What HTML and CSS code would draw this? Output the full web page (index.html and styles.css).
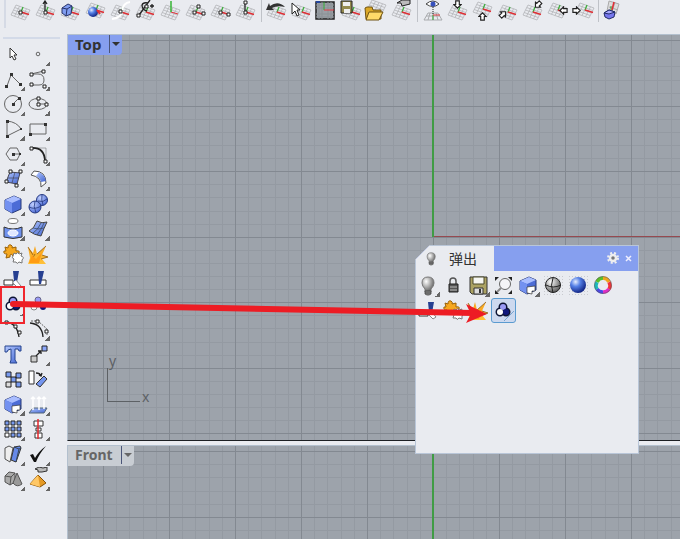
FILE: index.html
```
<!DOCTYPE html>
<html lang="zh">
    <head>
        <meta charset="UTF-8">
        <title>Top / Front</title>
        <link rel="stylesheet" href="styles.css">
    </head>
    <body>
        <!-- shared icons -->
        <svg class="defs" aria-hidden="true">
            <defs>
                <linearGradient id="gBlue" x1="0" y1="0" x2="1" y2="1"><stop offset="0" stop-color="#b3c8ff"/><stop offset="1" stop-color="#3f62cf"/></linearGradient>
                <radialGradient id="gBall" cx=".35" cy=".3" r=".75"><stop offset="0" stop-color="#e6eeff"/><stop offset=".4" stop-color="#5580e6"/><stop offset="1" stop-color="#0b1c7c"/></radialGradient>
                <radialGradient id="gSoft" cx=".35" cy=".3" r=".8"><stop offset="0" stop-color="#c3d2ff"/><stop offset="1" stop-color="#3f5fd0"/></radialGradient>
                <radialGradient id="gGrey" cx=".35" cy=".3" r=".75"><stop offset="0" stop-color="#fff"/><stop offset=".5" stop-color="#aaa"/><stop offset="1" stop-color="#555"/></radialGradient>
                <linearGradient id="gGold" x1="0" y1="0" x2="0" y2="1"><stop offset="0" stop-color="#f7a21a"/><stop offset="1" stop-color="#ffc23c"/></linearGradient>
            </defs>
            <symbol id="mesh" viewBox="0 0 25 25">
                <path d="M8 5L22 10L17 20L3 15ZM11.500 6.300L6.500 16.300M15 7.500L10 17.500M18.500 8.800L13.500 18.800M6.700 7.500L20.700 12.500M5.500 10L19.500 15M4.200 12.500L18.200 17.500" fill="none" stroke="#b2b4b8" stroke-width=".8"/>
            </symbol>
            <symbol id="plane" viewBox="0 0 25 25">
                <use href="#mesh"/>
                <path d="M13 12L15 7" stroke="#3fae3f" stroke-width="1.300"/>
                <path d="M13 12L21 14.500" stroke="#e02f35" stroke-width="1.400"/>
            </symbol>
            <symbol id="arrow" viewBox="0 0 10 10">
                <path d="M3 1H7V5H9L5 9L1 5H3Z" fill="#fff" stroke="#222" stroke-width="1.300"/>
            </symbol>
            <symbol id="puzzle" viewBox="0 0 25 25">
                <path d="M4 5L7 6Q7 2 10 3Q12 4 11 6L15 5L15 9Q19 8 18 11L15 12L15 15L12 14Q11 11 9 13L9 15L5 16L6 12Q2 12 3 9L5 9Z" fill="#f6a81f" stroke="#9a6209"/>
                <path d="M13 11L15 12Q17 9 18 12L21 11L20 14Q24 15 21 18L21 21L18 20Q16 23 15 20L12 20L13 17Q10 16 12 14Z" fill="#fff" stroke="#777"/>
            </symbol>
            <symbol id="burst" viewBox="0 0 25 25">
                <path d="M2 5L7 11L9 4L11 12L20 4L16 13L22 15L16 17L20 22H2L4 16Z" fill="url(#gGold)"/>
                <path d="M2 5L7 13M11 12L20 4M16 13L22 15L15 17M9 12L4 21" fill="none" stroke="#8a5a14" stroke-width=".8"/>
                <path d="M3 21L6 13L10 17L16 10L13 21Z" fill="#ff9c14"/>
            </symbol>
            <symbol id="trim" viewBox="0 0 25 25">
                <path d="M3 13H12V18H3Z" fill="#fff" stroke="#333"/>
                <path d="M12 4H18L16 15L13 14Z" fill="#263f91"/>
                <path d="M15 13L20 19L17 21L12 16" fill="#fff" stroke="#888"/>
            </symbol>
            <symbol id="balls" viewBox="0 0 25 25">
                <g stroke="#0c1334" stroke-width="3"><circle cx="12" cy="9" r="3"/><circle cx="9" cy="14" r="3"/><circle cx="15" cy="14" r="3"/></g>
                <circle cx="12" cy="9" r="3" fill="#9a9af6"/><circle cx="9" cy="14" r="3" fill="#fff"/><circle cx="15" cy="14" r="3" fill="#10177b"/>
            </symbol>
            <symbol id="cube" viewBox="0 0 25 25">
                <path d="M4 8L13 4L20 7V17L11 21L4 17Z" fill="#4c6cd6" stroke="#293a78"/>
                <path d="M4 8L13 4L20 7L11 11Z" fill="#a9bdff"/><path d="M4 8L11 11V21L4 17Z" fill="#7391f0"/>
            </symbol>
            <symbol id="cubeCut" viewBox="0 0 25 25">
                <use href="#cube"/><path d="M11 14L19 13V18L16 18V21L11 20Z" fill="#fff" stroke="#333" stroke-width=".7"/>
            </symbol>
            <symbol id="disk" viewBox="0 0 25 25">
                <path d="M4 4H21V21H6L4 19Z" fill="#aba263" stroke="#333"/>
                <path d="M7 4H18V11H7Z" fill="#f5f6f2" stroke="#4d4a2a"/><path d="M8 15H17V21H8Z" fill="#ddd" stroke="#333"/><path d="M13 16H15V20H13Z" fill="#333"/>
            </symbol>
            <symbol id="bulb" viewBox="0 0 25 25">
                <path d="M12 4Q6 4 6 10Q6 13 9 16V19H15V16Q18 13 18 10Q18 4 12 4Z" fill="url(#gGrey)" stroke="#777"/>
                <path d="M9 18H15V21L13 22H11L9 21ZM9 20H15" fill="#888" stroke="#444" stroke-width=".8"/>
            </symbol>
        </svg>

        <header class="toolbar">
            <button aria-label="CPlane origin"><svg><use href="#plane"/><path class="dot" d="M11 11h3v3h-3z"/></svg></button>
            <button aria-label="CPlane elevation"><svg><use href="#plane"/><path class="ink" d="M12 11V1M10 4L12 1L14 4"/><path class="dot" d="M11 11h3v3h-3z"/></svg></button>
            <button aria-label="CPlane to object"><svg><use href="#plane"/><path d="M4 8L10 4L14 6L13 14L8 16L4 13Z" fill="#7f9cf0" stroke="#27336b"/><path d="M4 8L9 9L14 6M9 9L8 16" stroke="#27336b" fill="none"/></svg></button>
            <button aria-label="CPlane to surface"><svg><use href="#plane" y="-2"/><circle cx="10" cy="12" r="5" fill="url(#gBall)"/><path d="M14 10L17 14" stroke="#e02f35" stroke-width="2"/></svg></button>
            <button aria-label="CPlane to curve"><svg><use href="#plane"/><path d="M4 19Q13 18 14 11Q15 3 22 2" fill="none" stroke="#fff" stroke-width="2"/><path class="dot" d="M11 10h3v3h-3z"/></svg></button>
            <button aria-label="CPlane perpendicular"><svg><use href="#plane"/><path class="ink" d="M6 15L17 0M9 5Q10 2 15 3M9 5Q9 10 14 11M17 6H21M19 4V8"/><path class="dot" d="M4 14h3v3h-3zM12 5h3v3h-3z"/></svg></button>
            <button aria-label="CPlane rotate"><svg><use href="#mesh"/><path d="M13 12L20 14" stroke="#e02f35"/><path d="M13 12V1" stroke="#35b535" stroke-width="1.500"/></svg></button>
            <button aria-label="CPlane 3 points"><svg><use href="#plane"/><path class="dot" d="M10 11h3v3h-3zM14 5h3v3h-3zM19 12h3v3h-3z"/></svg></button>
            <button aria-label="CPlane X axis"><svg><use href="#plane"/><path class="dot" d="M11 11h3v3h-3zM19 13h3v3h-3z"/></svg></button>
            <button aria-label="CPlane Z axis"><svg><use href="#plane"/><path class="ink" d="M12 11V3"/><path class="dot" d="M11 11h3v3h-3zM11 1h3v3h-3z"/></svg></button>
            <i class="sep"></i>
            <button aria-label="Previous CPlane"><svg><use href="#plane"/><path d="M2 10L5 3L6 6Q14 0 21 7Q13 5 8 8L10 10Z" fill="#333"/></svg></button>
            <button aria-label="Select CPlane"><svg><use href="#plane"/><path d="M3 3V14L6 11L8 16L10 15L8 10H11Z" fill="#fff" stroke="#222"/></svg></button>
            <button aria-label="Named CPlanes"><svg><path d="M2 2H20V19H2Z" fill="#9a9fa5" stroke="#222" stroke-width="1.500"/><path d="M5 2V19M8 2V19M14 2V19M17 2V19M2 5H20M2 8H20M2 14H20M2 17H20" stroke="#8b9196"/><path d="M10 2V10" stroke="#35ac35"/><path d="M10 10H20" stroke="#e23a40"/><path d="M2 2H6" stroke="#23459c" stroke-width="2"/></svg></button>
            <button aria-label="Save CPlane"><svg><use href="#plane"/><path d="M2 1H13V13H2Z" fill="#958b4f" stroke="#222"/><path d="M4 2H11V6H4ZM5 9H11V13H5Z" fill="#eee"/></svg></button>
            <button aria-label="Open CPlane"><svg><use href="#mesh" y="-5"/><path d="M1 8L3 7H8L9 10H17V19H2Z" fill="#dba827" stroke="#6f5312"/><path d="M5 12H19L15 20H2Z" fill="#ffda69" stroke="#6f5312"/></svg></button>
            <button aria-label="Read CPlane"><svg><use href="#plane"/><path d="M8 3L13 0H21V4L17 5L13 6L12 3Z" fill="#bbb" stroke="#222"/></svg></button>
            <i class="sep"></i>
            <button aria-label="Plan view"><svg><path d="M8 13H18L22 20H4ZM10 13L8 20M13 13V20M16 13L18 20M6 16H20" fill="none" stroke="#a9abae"/><path d="M6 4Q13 -2 19 4Q13 9 6 4Z" fill="#fff" stroke="#444"/><circle cx="13" cy="4" r="2.500" fill="#3650bc"/><path d="M13 7V15" stroke="#222" stroke-dasharray="1 1"/><path d="M13 15V20" stroke="#30a030"/><path d="M13 15H20" stroke="#e23a40"/></svg></button>
            <button aria-label="World top"><svg><use href="#plane"/><use href="#arrow" x="8" y="0" width="9" height="9"/></svg></button>
            <button aria-label="World bottom"><svg><use href="#plane" y="-3"/><use href="#arrow" width="9" height="9" transform="translate(17 21) rotate(180)"/></svg></button>
            <button aria-label="World left"><svg><use href="#plane"/><use href="#arrow" width="9" height="9" transform="translate(4 11) rotate(-135 4 4)"/></svg></button>
            <button aria-label="World right"><svg><use href="#plane"/><use href="#arrow" width="9" height="9" transform="translate(14 0) rotate(45 4 4)"/></svg></button>
            <button aria-label="World front"><svg><use href="#plane" y="-2"/><use href="#arrow" width="9" height="9" transform="translate(23 6) rotate(90)"/></svg></button>
            <button aria-label="World back"><svg><use href="#plane" x="2" y="-2"/><use href="#arrow" width="9" height="9" transform="translate(2 15) rotate(-90)"/></svg></button>
            <i class="sep"></i>
            <button aria-label="Box view"><svg><path d="M8 1L18 4L15 14L6 11ZM14 2L11 12M8 7L17 10" fill="#ddd" stroke="#aaa"/><path d="M10 10V6" stroke="#289b28"/><path d="M11 10L13 2" stroke="#e02f35" stroke-width="1.500"/><path d="M3 13L8 10L14 12L13 17L8 19L4 17Z" fill="#7777ed" stroke="#222c69"/><path d="M3 13L8 14L14 12L8 10Z" fill="#a9a9ff" stroke="#222c69"/></svg></button>
        </header>

        <main class="work">
            <aside class="palette">
                <button aria-label="Select"><svg><path d="M9 6V16L11 14L13 18L15 17L13 13H16Z" fill="#fff" stroke="#333"/></svg></button>
                <button class="fly" aria-label="Point"><svg><circle class="fine" cx="12" cy="12" r="1.800"/></svg></button>
                <button class="fly" aria-label="Polyline"><svg><path class="fine" d="M6 19L10 8L19 17"/><path class="spot" d="M4 18h3v3h-3zM9 6h3v3h-3zM18 16h3v3h-3z"/></svg></button>
                <button class="fly" aria-label="Curve"><svg><path class="fine" d="M5 7H12Q18 7 18 13Q18 18 13 18H5M5 7L18 4"/><path class="dot" d="M4 6h3v3h-3zM16 3h3v3h-3zM4 16h3v3h-3zM17 18h3v3h-3z"/></svg></button>
                <button class="fly" aria-label="Circle"><svg><circle class="fine" cx="12" cy="12" r="8.500"/><path class="fine" d="M12 12L18 6"/><path class="spot" d="M11 11h3v3h-3zM17 5h3v3h-3z"/></svg></button>
                <button class="fly" aria-label="Ellipse"><svg><ellipse class="fine" cx="12" cy="12" rx="9" ry="5.500"/><path class="fine" d="M12 6V12H20"/><path class="dot" d="M11 5h3v3h-3zM11 11h3v3h-3zM19 11h3v3h-3z"/></svg></button>
                <button class="fly" aria-label="Arc"><svg><path class="fine" d="M6 4Q16 5 20 12L6 19Z"/><path class="spot" d="M5 3h3v3h-3zM19 11h2v2h-2zM5 18h3v3h-3z"/></svg></button>
                <button class="fly" aria-label="Rectangle"><svg><path class="fine" d="M4 7H20V17H4Z"/><path class="spot" d="M3 16h3v3h-3zM18 6h3v3h-3z"/></svg></button>
                <button class="fly" aria-label="Polygon"><svg><path class="fine" d="M5 12L9 6H16L19 12L16 18H9ZM12 12H19"/><path class="spot" d="M11 11h3v3h-3zM18 11h2v2h-2z"/></svg></button>
                <button class="fly" aria-label="Fillet curves"><svg><path class="fine" d="M5 6H20V20" opacity=".5"/><path d="M5 6Q19 5 19 20" fill="none" stroke="#222" stroke-width="1.800"/><path class="dot" d="M4 5h3v3h-3zM18 18h3v3h-3z"/></svg></button>
                <button class="fly" aria-label="Surface from points"><svg><path d="M9 5L19 6L16 17L5 15Z" fill="url(#gBlue)" stroke="#445"/><path d="M14 5L11 16M7 11L18 11" stroke="#445" stroke-width=".7"/><path class="dot" d="M8 3h3v3h-3zM18 3h3v3h-3zM14 17h3v3h-3zM4 13h3v3h-3z"/></svg></button>
                <button class="fly" aria-label="Loft"><svg><path d="M5 8L8 4Q20 4 20 16L15 20Q16 10 5 8Z" fill="#fff" stroke="#555"/><path d="M10 9L13 5Q19 8 20 14L15 15Q14 11 10 9Z" fill="url(#gBlue)"/></svg></button>
                <button class="fly" aria-label="Box"><svg><use href="#cube"/></svg></button>
                <button class="fly" aria-label="Boolean union"><svg><circle cx="16" cy="8" r="5.500" fill="url(#gSoft)" stroke="#263a82"/><circle cx="9" cy="15" r="6" fill="url(#gSoft)" stroke="#263a82"/><path d="M3 15Q9 18 15 14M9 9Q7 14 10 21M12 9Q17 11 21 7M16 3Q15 7 17 13" fill="none" stroke="#24397f" stroke-width=".8"/></svg></button>
                <button class="fly" aria-label="Project"><svg><ellipse cx="12" cy="4" rx="5" ry="2.500" fill="#fff" stroke="#777"/><path d="M3 10Q12 14 21 10V20Q12 23 3 20Z" fill="#6f91ed" stroke="#333"/><ellipse cx="12" cy="16" rx="5" ry="3" fill="#dfe7ff" stroke="#fff"/></svg></button>
                <button class="fly" aria-label="Surface tools"><svg><path d="M3 14Q8 12 11 4Q16 7 21 5Q18 11 15 19Q8 18 3 14Z" fill="url(#gBlue)" stroke="#444"/><path d="M7 16Q12 13 15 6M11 18Q15 13 18 6M7 11Q12 13 18 11" fill="none" stroke="#345" stroke-width=".7"/></svg></button>
                <button aria-label="Join"><svg><use href="#puzzle"/></svg></button>
                <button aria-label="Explode"><svg><use href="#burst"/></svg></button>
                <button aria-label="Trim"><svg><use href="#trim"/></svg></button>
                <button aria-label="Split"><svg><path d="M4 13H20V18H4Z" fill="#fff" stroke="#333"/><path d="M12 4H18L15 17H13Z" fill="#263f91"/></svg></button>
                <button class="fly marked" aria-label="Group"><svg><use href="#balls"/></svg></button>
                <button aria-label="Ungroup"><svg><circle cx="12" cy="8" r="3" fill="#9a9af6" stroke="#668"/><circle cx="8" cy="15" r="3" fill="#fff" stroke="#888"/><circle cx="17" cy="15" r="3" fill="#10177b"/></svg></button>
                <button aria-label="Edit points"><svg><path class="ink" d="M5 5Q16 6 18 20"/><path class="dot" d="M4 4h3v3h-3zM13 8h3v3h-3zM17 14h3v3h-3z"/></svg></button>
                <button class="fly" aria-label="Control points"><svg><path class="ink" d="M4 6Q16 7 17 20"/><path class="fine" d="M5 4H12L21 12V18" stroke-dasharray="2 1"/><path class="dot" d="M10 3h3v3h-3zM19 13h3v3h-3z"/></svg></button>
                <button aria-label="Text"><svg><path d="M4 4H20V9H18L17 7L14 7V18L16 21H9L10 18V7L7 8L6 10H4Z" fill="url(#gBlue)" stroke="#27458e"/></svg></button>
                <button class="fly" aria-label="Move"><svg><path d="M16 4H21V9H16Z" fill="#8ba6fa" stroke="#222"/><path d="M5 14H11V20H5Z" fill="#ccc" stroke="#333"/><path class="ink" d="M10 14L15 9M12 9H15V12"/></svg></button>
                <button aria-label="Copy"><svg class="boxes"><path d="M5 5h5v5h-5zM15 6h5v5h-5zM10 10h5v5h-5zM15 15h5v5h-5z"/><path fill="#ddd" d="M5 15h5v5h-5z"/></svg></button>
                <button aria-label="Rotate"><svg><path d="M3 4H8V17H3Z" fill="#fff" stroke="#333"/><path d="M18 9L21 12L14 20L10 17Z" fill="#7495ef" stroke="#333"/><path class="ink" d="M10 6Q14 6 15 9M13 8L15 9L16 6"/></svg></button>
                <button class="fly" aria-label="Solid edit"><svg><use href="#cubeCut"/></svg></button>
                <button class="fly" aria-label="Extrude"><svg><path d="M7 16H21L18 21H3Z" fill="url(#gBlue)" stroke="#567"/><path d="M7 18V5M13 18V5M18 17V5M5 7L7 5L9 7M11 7L13 5L15 7M16 7L18 5L20 7" fill="none" stroke="#fff" stroke-width="1.500"/></svg></button>
                <button class="fly" aria-label="Array"><svg class="boxes"><path d="M4 4h4v4h-4zM10 4h4v4h-4zM16 4h4v4h-4zM4 10h4v4h-4zM10 10h4v4h-4zM16 10h4v4h-4zM10 16h4v4h-4zM16 16h4v4h-4z"/><path fill="#fff" d="M4 16h4v4h-4z"/></svg></button>
                <button class="fly" aria-label="Align"><svg><path d="M8 4H17V9H8ZM10 11H15V14H10ZM9 16H16V21H9Z" fill="#fff" stroke="#333"/><path d="M12 2V22" stroke="#e52a2f" stroke-width="1.500"/></svg></button>
                <button class="fly" aria-label="Mirror"><svg><path d="M4 6L8 4L12 6L9 20L4 17Z" fill="#eee" stroke="#555"/><path d="M13 5L19 4L20 6L15 20L10 18Z" fill="#6689e8" stroke="#333"/><path d="M13 5L18 7L20 6M18 7L15 20" fill="none" stroke="#345"/></svg></button>
                <button class="fly" aria-label="Check"><svg><path d="M4 13L7 12L9 16Q13 9 20 4Q13 12 10 20H8Z" fill="#111"/></svg></button>
                <button class="fly" aria-label="Primitives"><svg><path d="M4 9L8 5L14 6V15L9 18L4 15Z" fill="#aaa" stroke="#555"/><path d="M4 9L10 10L14 6M10 10L9 18" fill="none" stroke="#555"/><path d="M16 6L21 17Q16 21 12 16Z" fill="#999" stroke="#555"/></svg></button>
                <button class="fly" aria-label="Edit solid"><svg><path d="M12 8L20 16L14 20L4 17Z" fill="#e59a25" stroke="#875209"/><path d="M12 8L14 20L4 17Z" fill="#ffc765"/><path d="M9 2L13 0L17 1L21 0V4L16 5L12 5V3Z" fill="#bbb" stroke="#333"/></svg></button>
            </aside>

            <div class="views">
                <section class="view">
                    <button class="name">Top<i></i></button>
                    <div class="axis-y"></div>
                    <div class="axis-x"></div>
                    <div class="ucs"><span class="y">y</span><span class="corner"></span><span class="x">x</span></div>
                </section>
                <section class="view view2">
                    <button class="name">Front<i></i></button>
                    <div class="axis-y"></div>
                </section>
            </div>
        </main>

        <!-- floating panel -->
        <section class="popup">
            <div class="title">
                <h2><svg><use href="#bulb" width="17" height="17" x="5" y="4"/></svg>弹出</h2>
                <button aria-label="Options"><svg viewBox="0 0 25 25"><circle cx="15" cy="12" r="5" fill="none" stroke="#eee" stroke-width="2" stroke-dasharray="2 2"/><circle cx="15" cy="12" r="3" fill="#777" stroke="#eee" stroke-width="2.500"/></svg></button>
                <button class="close" aria-label="Close"><svg viewBox="0 0 12 25"><path d="M3 10L8 15M8 10L3 15" stroke="#eef" stroke-width="1.500"/></svg></button>
            </div>
            <div class="tools">
                <button class="fly" aria-label="Hide"><svg><use href="#bulb"/></svg></button>
                <button aria-label="Lock"><svg><path d="M9 12V8Q9 5 12 5Q15 5 15 8V12" fill="none" stroke="#555" stroke-width="1.500"/><path d="M8 11H17V19H8Z" fill="#555" stroke="#222"/><path d="M9 14H16M9 17H16" stroke="#bbb"/></svg></button>
                <button class="fly" aria-label="Save"><svg><use href="#disk"/></svg></button>
                <button aria-label="Zoom extents"><svg><circle cx="14" cy="11" r="5.500" fill="#f5f5f7" stroke="#666"/><path d="M10 15L6 19" stroke="#888" stroke-width="2"/><path d="M4 4H8L4 8ZM21 4H17L21 8ZM4 21H8L4 17ZM21 21H17L21 17Z" fill="#222"/></svg></button>
                <button class="fly" aria-label="Solid edit"><svg><use href="#cubeCut"/></svg></button>
                <button class="dots" aria-label="Shade"><svg><circle cx="12" cy="12" r="7.500" fill="url(#gGrey)" stroke="#222"/><path d="M5 12Q12 16 20 12M12 5Q9 12 12 20" fill="none" stroke="#222"/></svg></button>
                <button class="dots" aria-label="Render"><svg><circle cx="12" cy="12" r="8" fill="url(#gBall)"/></svg></button>
                <button aria-label="Colour"><svg fill="none" stroke-width="3.500"><path d="M12 5A7 7 0 0 1 18 9" stroke="#f0a51d"/><path d="M18 9A7 7 0 0 1 18 16" stroke="#f13438"/><path d="M18 16A7 7 0 0 1 12 19" stroke="#e02dc6"/><path d="M12 19A7 7 0 0 1 6 16" stroke="#4b48e8"/><path d="M6 16A7 7 0 0 1 6 9" stroke="#1cb9bc"/><path d="M6 9A7 7 0 0 1 12 5" stroke="#59bf27"/><circle cx="12" cy="12" r="8.500" stroke="#555" stroke-width=".6"/></svg></button>
                <button aria-label="Trim"><svg><use href="#trim"/></svg></button>
                <button aria-label="Join"><svg><use href="#puzzle"/></svg></button>
                <button aria-label="Explode"><svg><use href="#burst"/></svg></button>
                <button class="on" aria-label="Group"><svg><use href="#balls"/><path d="M13 23L23 13" stroke="#79a4cf"/></svg></button>
            </div>
        </section>

        <!-- drag arrow over everything -->
        <svg class="drag" viewBox="0 0 488 40" aria-hidden="true">
            <path d="M13 14L473 23" stroke="#ed1c24" stroke-width="6" stroke-linecap="round"/>
            <path d="M487 24L466 14L471 24L466 33Z" fill="#ed1c24"/>
        </svg>
    </body>
</html>
```
FILE: styles.css
```
*{
    box-sizing: border-box;
}
body{
    margin: 0;
    height: 100vh;
    display: flex;
    flex-direction: column;
    overflow: hidden;
    position: relative;
    background: #e9ebf0;
    color: #333;
    font: 15px/20px "Noto Sans", "Noto Sans CJK SC", sans-serif;
}
button{
    margin: 0;
    padding: 0;
    border: 0;
    background: none;
    font: inherit;
    color: inherit;
}
.defs{
    position: absolute;
    width: 0;
    height: 0;
}
button svg,
.title svg{
    display: block;
    width: 25px;
    height: 25px;
}
/* icon strokes */
.dot{
    fill: #fff;
    stroke: #222;
}
.ink{
    fill: none;
    stroke: #222;
    stroke-width: 1.3;
}
.fine{
    fill: none;
    stroke: #666;
}
.spot{
    fill: #333;
}
.boxes{
    fill: #789aef;
    stroke: #222;
}

/* top toolbar */
.toolbar{
    flex: none;
    display: flex;
    height: 34px;
    padding-left: 8px;
    background: linear-gradient(#d5dae5, #d5dae5) 4px 0 / 2px 28px no-repeat;
}
.toolbar button{
    flex: none;
    width: 25px;
    height: 25px;
}
.sep{
    flex: none;
    width: 1px;
    height: 22px;
    margin: 0 2px 0 3px;
    background: #bfc2c8;
}

.work{
    flex: 1;
    display: flex;
    min-height: 0;
}
/* left tools */
.palette{
    flex: none;
    width: 67px;
    padding: 8px 0 0 1px;
    display: grid;
    grid-template-columns: 25px 25px;
    grid-auto-rows: 25px;
    align-content: start;
    background: linear-gradient(#d3dae8, #d3dae8) 3px 3px / 57px 2px no-repeat;
}
/* small triangle = more tools */
.fly{
    background: linear-gradient(135deg, transparent 50%, #666 50%) 19px 19px / 5px 5px no-repeat;
}
.marked{
    position: relative;
}
.marked::after{
    content: '';
    position: absolute;
    inset: -6px 1px -7px -1px;
    border: 2px solid #f0262d;
}

/* viewports */
.views{
    flex: 1;
    display: grid;
    grid-template-rows: 13fr 3fr;
    gap: 4px;
    min-width: 0;
}
.view{
    --minor: #949aa2;
    --major: #838991;
    position: relative;
    overflow: hidden;
    border-top: 1px solid #b3c0ce;
    border-left: 1px solid #b3c0ce;
    background-color: #9da3ab;
    background-image:
        linear-gradient(90deg, var(--major) 1px, transparent 1px),
        linear-gradient(transparent 66px, var(--major) 66px 67px, transparent 67px),
        linear-gradient(var(--major) 1px, transparent 1px),
        linear-gradient(90deg, transparent 13px, var(--minor) 13px 14px, transparent 14px 26px, var(--minor) 26px 27px, transparent 27px 40px, var(--minor) 40px 41px, transparent 41px 53px, var(--minor) 53px 54px, transparent 54px),
        linear-gradient(transparent 13px, var(--minor) 13px 14px, transparent 14px 26px, var(--minor) 26px 27px, transparent 27px 40px, var(--minor) 40px 41px, transparent 41px 53px, var(--minor) 53px 54px, transparent 54px 79px, var(--minor) 79px 80px, transparent 80px 92px, var(--minor) 92px 93px, transparent 93px 105px, var(--minor) 105px 106px, transparent 106px 118px, var(--minor) 118px 119px, transparent 119px);
    background-size: 66px 131px;
    background-position: 35px 5px;
}
.view:first-child{
    border-bottom: 1px solid #1c1f23;
}
.name{
    display: flex;
    align-items: center;
    height: 20px;
    padding: 0 0 2px 7px;
    border-radius: 0 0 4px 0;
    background: #869fef;
    font-weight: bold;
}
.name i{
    width: 13px;
    height: 18px;
    margin-left: 8px;
    border-left: 1px solid #4a5578;
    display: grid;
    place-items: center;
}
.name i::after{
    content: '';
    border: 4px solid transparent;
    border-top-color: currentColor;
    border-bottom: 0;
}
.view2 .name{
    background: #c8cdd3;
    color: #666;
    font-size: 14px;
}
.axis-y{
    position: absolute;
    left: 364px;
    top: 0;
    width: 2px;
    height: 202px;
    background: #409c45;
}
.axis-x{
    position: absolute;
    left: 366px;
    right: 0;
    top: 201px;
    height: 1px;
    background: #964a50;
}
/* x y mark in the lower left corner */
.ucs{
    position: absolute;
    left: 39px;
    bottom: 38px;
    display: grid;
    grid-template-columns: 33px auto;
    column-gap: 2px;
    color: #5d6165;
    font-size: 14px;
    line-height: 14px;
}
.ucs .y{
    grid-column: 1 / 3;
    padding-left: 2px;
}
.ucs .corner{
    height: 34px;
    border-left: 1px solid #5d6165;
    border-bottom: 1px solid #5d6165;
}
.ucs .x{
    align-self: end;
    margin-bottom: -2px;
}

/* floating panel */
.popup{
    position: absolute;
    left: 415px;
    top: 245px;
    width: 224px;
    height: 209px;
    border: 1px solid #b9c6d8;
    background: #e9ebf0;
    clip-path: polygon(15px 0, 100% 0, 100% 100%, 0 100%, 0 15px);
}
.title{
    display: flex;
    height: 25px;
    background: #869fef;
}
.title h2{
    display: flex;
    width: 78px;
    margin: 0 auto 0 0;
    padding-left: 2px;
    gap: 6px;
    background: #e9ebf0;
    font-size: 14px;
    line-height: 25px;
    font-weight: normal;
    white-space: nowrap;
}
.title .close,
.title .close svg{
    width: 12px;
}
.title .close{
    margin-right: 3px;
}
.tools{
    display: grid;
    grid-template-columns: repeat(auto-fill, 25px);
    grid-auto-rows: 25px;
    padding-top: 2px;
}
.dots{
    background: radial-gradient(#c8cacf 1px, transparent 1px) 0 0 / 3px 3px content-box;
    background-clip: content-box;
    padding: 2px;
}
.dots svg{
    margin: -2px;
}
.on{
    border: 1px solid #5b9bd0;
    border-radius: 3px;
    background: #cdd9ef;
}
.on svg{
    margin: -1px;
}

.drag{
    position: absolute;
    left: 0;
    top: 290px;
    width: 488px;
    height: 40px;
    pointer-events: none;
}
```
